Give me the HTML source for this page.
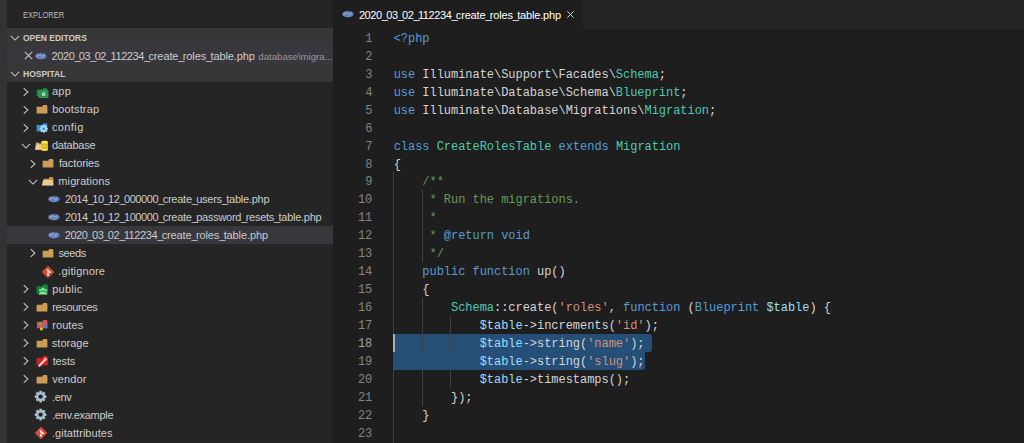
<!DOCTYPE html>
<html><head><meta charset="utf-8"><title>editor</title>
<style>
html,body{margin:0;padding:0;background:#1e1e1e;}
body{width:1024px;height:443px;overflow:hidden;position:relative;font-family:"Liberation Sans",sans-serif;}
.abs{position:absolute;}
#strip{left:0;top:0;width:7px;height:443px;background:#333333;}
#side{left:7px;top:0;width:326px;height:443px;background:#252526;overflow:hidden;}
#band{left:0;top:28.4px;width:326px;height:53.85px;background:#373737;}
#oerow{left:0;top:46.35px;width:326px;height:17.95px;background:#37373d;}
#selrow{left:0;top:226.0px;width:326px;height:17.95px;background:#37373d;}
.u{letter-spacing:-1.7px}.d{letter-spacing:-0.4px}
.t{position:absolute;white-space:nowrap;font-size:11px;line-height:18px;height:18px;color:#cccccc;}
.h{position:absolute;white-space:nowrap;font-size:9.3px;line-height:18px;height:18px;color:#cccccc;font-weight:bold;}
#ed{left:333px;top:0;width:691px;height:443px;background:#1e1e1e;overflow:hidden;}
#tabbar{left:0;top:0;width:691px;height:28.5px;background:#252526;}
#tab{left:0;top:0;width:250px;height:28.5px;background:#1e1e1e;}
.ln{position:absolute;left:0;width:39.3px;text-align:right;font-family:"Liberation Mono",monospace;font-size:12px;line-height:17.96px;height:17.96px;color:#858585;letter-spacing:-0.035px;}
.cl{position:absolute;left:60.7px;white-space:pre;font-family:"Liberation Mono",monospace;font-size:12px;line-height:17.96px;height:17.96px;color:#d4d4d4;letter-spacing:-0.035px;}
.k{color:#569cd6}.c{color:#4ec9b0}.g{color:#6a9955}.s{color:#ce9178}.v{color:#9cdcfe}
.guide{position:absolute;width:1px;background:#404040;}
.sel{position:absolute;background:#264f78;}
</style></head><body>
<div id="strip" class="abs"></div>
<div id="side" class="abs">
<div id="band" class="abs"></div><div id="oerow" class="abs"></div>
<div id="selrow" class="abs"></div>

<div class="t" id="hx" style="left:15.7px;top:5.5px;font-size:9.3px;color:#bbbbbb;transform-origin:0 50%;transform:scaleX(0.815)">EXPLORER</div>
<svg class="abs" style="left:2.5px;top:33.5px" width="10" height="8" viewBox="0 0 10 8"><path d="M0.9 1.9 L5 6 L9.1 1.9" fill="none" stroke="#c5c5c5" stroke-width="1.05"/></svg>
<div class="h" id="ho" style="left:16.3px;top:28.5px;transform-origin:0 50%;transform:scaleX(0.91)">OPEN EDITORS</div>
<svg class="abs" style="left:16.5px;top:51.1px" width="9" height="9" viewBox="0 0 9 9"><path d="M0.8 0.8 L8.2 8.2 M8.2 0.8 L0.8 8.2" stroke="#c5c5c5" stroke-width="1.05"/></svg>
<svg class="abs" style="left:26.700000000000003px;top:48.5px;overflow:visible" width="14" height="14" viewBox="0 0 14 14"><defs><linearGradient id="pg" x1="0" y1="0" x2="0" y2="1"><stop offset="0" stop-color="#485f92"/><stop offset="0.55" stop-color="#5878b8"/><stop offset="1" stop-color="#6b90d0"/></linearGradient></defs><ellipse cx="7" cy="7" rx="5.8" ry="3.2" fill="url(#pg)"/><path d="M2.5 8.3 l0.7 -2.6 q1.7 -0.3 1.4 0.9 q-0.3 0.8 -1.6 0.6 M5.5 7.3 l0.7 -2.7 M5.9 6.1 q1.8 -0.8 1.4 0.6 l-0.2 0.7 M8.3 8.3 l0.7 -2.6 q1.7 -0.3 1.4 0.9 q-0.3 0.8 -1.6 0.6" stroke="#b4bdd2" stroke-width="0.7" fill="none"/></svg>
<div class="t" style="left:44.5px;top:47px"><span id="oe"><span class="d">2020</span><span class="u">_</span><span class="d">03</span><span class="u">_</span><span class="d">02</span><span class="u">_</span><span class="d">112234</span><span class="u">_</span><span style="letter-spacing:-0.113px">create<span class="u">_</span>roles<span class="u">_</span>table.php</span></span><span id="oed" style="font-size:9.65px;color:#9a9a9a;margin-left:3.6px">database\migra...</span></div>
<svg class="abs" style="left:2.5px;top:69.5px" width="10" height="8" viewBox="0 0 10 8"><path d="M0.9 1.9 L5 6 L9.1 1.9" fill="none" stroke="#c5c5c5" stroke-width="1.05"/></svg>
<div class="h" id="hh" style="left:16.3px;top:64.5px;transform-origin:0 50%;transform:scaleX(0.915)">HOSPITAL</div>
<svg class="abs" style="left:15.100000000000001px;top:86.75px" width="8" height="10" viewBox="0 0 8 10"><path d="M1.7 1.2 L5.9 5 L1.7 8.8" fill="none" stroke="#c5c5c5" stroke-width="1.05"/></svg>
<svg class="abs" style="left:27.799999999999997px;top:84.45px;overflow:visible" width="14" height="14" viewBox="0 0 14 14"><path d="M1.6 5.4 H7.3 L8.2 3.9 H11.9 L12.4 5.4 V12 H1.6 Z" fill="#1a7b3d"/><rect x="4" y="6.9" width="9" height="6.5" fill="#1f8d47" stroke="#49bb6b" stroke-width="0.7"/><circle cx="8.6" cy="10.2" r="1.9" fill="#c6efd1"/><path d="M8.6 9.2 V11 M7.8 10.4 L8.6 11.2 L9.4 10.4" stroke="#1f8d47" stroke-width="0.6" fill="none"/></svg>
<div class="t" id="r0" style="left:44.92px;top:82.45px"><span style="letter-spacing:0.345px">app</span></div>
<svg class="abs" style="left:15.100000000000001px;top:104.705px" width="8" height="10" viewBox="0 0 8 10"><path d="M1.7 1.2 L5.9 5 L1.7 8.8" fill="none" stroke="#c5c5c5" stroke-width="1.05"/></svg>
<svg class="abs" style="left:27.799999999999997px;top:102.405px;overflow:visible" width="14" height="14" viewBox="0 0 14 14"><path d="M1.6 4.7 H7.3 L8.2 3 H11.9 L12.4 4.7 V11.5 H1.6 Z" fill="#cc9d54"/></svg>
<div class="t" id="r1" style="left:45.13px;top:100.41px"><span style="letter-spacing:0.127px">bootstrap</span></div>
<svg class="abs" style="left:15.100000000000001px;top:122.66px" width="8" height="10" viewBox="0 0 8 10"><path d="M1.7 1.2 L5.9 5 L1.7 8.8" fill="none" stroke="#c5c5c5" stroke-width="1.05"/></svg>
<svg class="abs" style="left:27.799999999999997px;top:120.36px;overflow:visible" width="14" height="14" viewBox="0 0 14 14"><path d="M1.6 4.9 H7.3 L8.2 3.2 H11.9 L12.4 4.9 V11.6 H1.6 Z" fill="#3a8dd0"/><rect x="7.9" y="4.6" width="1.6" height="8.2" fill="#a9d6ef" transform="rotate(0 8.7 8.7)"/><rect x="7.9" y="4.6" width="1.6" height="8.2" fill="#a9d6ef" transform="rotate(45 8.7 8.7)"/><rect x="7.9" y="4.6" width="1.6" height="8.2" fill="#a9d6ef" transform="rotate(90 8.7 8.7)"/><rect x="7.9" y="4.6" width="1.6" height="8.2" fill="#a9d6ef" transform="rotate(135 8.7 8.7)"/><circle cx="8.7" cy="8.7" r="3.1" fill="#a9d6ef"/><circle cx="8.7" cy="8.7" r="1.3" fill="#3a8dd0"/></svg>
<div class="t" id="r2" style="left:44.91px;top:118.36px"><span style="letter-spacing:0.397px">config</span></div>
<svg class="abs" style="left:14.100000000000001px;top:141.615px" width="10" height="8" viewBox="0 0 10 8"><path d="M0.9 1.9 L5 6 L9.1 1.9" fill="none" stroke="#c5c5c5" stroke-width="1.05"/></svg>
<svg class="abs" style="left:27.799999999999997px;top:138.315px;overflow:visible" width="14" height="14" viewBox="0 0 14 14"><path d="M0.9 4.6 H3.6 L4.3 5.6 H7 V11.6 H0.3 Z" fill="#c9a05c"/><path d="M1.2 6.6 H7.4 V11.8 H0.1 Z" fill="#ebcf98"/><rect x="6.3" y="4" width="6.6" height="7.8" fill="#f1cf35"/><ellipse cx="9.6" cy="4" rx="3.3" ry="1.3" fill="#fbe45e"/><ellipse cx="9.6" cy="11.8" rx="3.3" ry="1.3" fill="#f1cf35"/><path d="M6.3 6.4 q3.3 1.6 6.6 0 M6.3 8.9 q3.3 1.6 6.6 0" stroke="#b8961a" stroke-width="0.7" fill="none"/></svg>
<div class="t" id="r3" style="left:44.91px;top:136.31px"><span style="letter-spacing:-0.213px">database</span></div>
<svg class="abs" style="left:21.5px;top:158.57px" width="8" height="10" viewBox="0 0 8 10"><path d="M1.7 1.2 L5.9 5 L1.7 8.8" fill="none" stroke="#c5c5c5" stroke-width="1.05"/></svg>
<svg class="abs" style="left:34.2px;top:156.26999999999998px;overflow:visible" width="14" height="14" viewBox="0 0 14 14"><path d="M1.6 4.7 H7.3 L8.2 3 H11.9 L12.4 4.7 V11.5 H1.6 Z" fill="#cc9d54"/></svg>
<div class="t" id="r4" style="left:51.91px;top:154.27px"><span style="letter-spacing:-0.115px">factories</span></div>
<svg class="abs" style="left:20.5px;top:177.525px" width="10" height="8" viewBox="0 0 10 8"><path d="M0.9 1.9 L5 6 L9.1 1.9" fill="none" stroke="#c5c5c5" stroke-width="1.05"/></svg>
<svg class="abs" style="left:34.2px;top:174.225px;overflow:visible" width="14" height="14" viewBox="0 0 14 14"><path d="M2.6 4.7 H7.6 L8.5 3 H11.9 L12.4 4.7 V11.3 H2.6 Z" fill="#c4964f"/><path d="M2.2 5.9 H11.6 L12.3 11.5 H0.8 Z" fill="#e9cb91"/></svg>
<div class="t" id="r5" style="left:51.30px;top:172.22px"><span style="letter-spacing:0.111px">migrations</span></div>
<svg class="abs" style="left:39.9px;top:192.18px;overflow:visible" width="14" height="14" viewBox="0 0 14 14"><defs><linearGradient id="pg" x1="0" y1="0" x2="0" y2="1"><stop offset="0" stop-color="#485f92"/><stop offset="0.55" stop-color="#5878b8"/><stop offset="1" stop-color="#6b90d0"/></linearGradient></defs><ellipse cx="7" cy="7" rx="5.8" ry="3.2" fill="url(#pg)"/><path d="M2.5 8.3 l0.7 -2.6 q1.7 -0.3 1.4 0.9 q-0.3 0.8 -1.6 0.6 M5.5 7.3 l0.7 -2.7 M5.9 6.1 q1.8 -0.8 1.4 0.6 l-0.2 0.7 M8.3 8.3 l0.7 -2.6 q1.7 -0.3 1.4 0.9 q-0.3 0.8 -1.6 0.6" stroke="#b4bdd2" stroke-width="0.7" fill="none"/></svg>
<div class="t" id="r6" style="left:57.93px;top:190.18px"><span class="d">2014</span><span class="u">_</span><span class="d">10</span><span class="u">_</span><span class="d">12</span><span class="u">_</span><span class="d">000000</span><span class="u">_</span><span style="letter-spacing:-0.250px">create<span class="u">_</span>users<span class="u">_</span>table.php</span></div>
<svg class="abs" style="left:39.9px;top:210.135px;overflow:visible" width="14" height="14" viewBox="0 0 14 14"><defs><linearGradient id="pg" x1="0" y1="0" x2="0" y2="1"><stop offset="0" stop-color="#485f92"/><stop offset="0.55" stop-color="#5878b8"/><stop offset="1" stop-color="#6b90d0"/></linearGradient></defs><ellipse cx="7" cy="7" rx="5.8" ry="3.2" fill="url(#pg)"/><path d="M2.5 8.3 l0.7 -2.6 q1.7 -0.3 1.4 0.9 q-0.3 0.8 -1.6 0.6 M5.5 7.3 l0.7 -2.7 M5.9 6.1 q1.8 -0.8 1.4 0.6 l-0.2 0.7 M8.3 8.3 l0.7 -2.6 q1.7 -0.3 1.4 0.9 q-0.3 0.8 -1.6 0.6" stroke="#b4bdd2" stroke-width="0.7" fill="none"/></svg>
<div class="t" id="r7" style="left:57.93px;top:208.13px"><span class="d">2014</span><span class="u">_</span><span class="d">10</span><span class="u">_</span><span class="d">12</span><span class="u">_</span><span class="d">100000</span><span class="u">_</span><span style="letter-spacing:-0.254px">create<span class="u">_</span>password<span class="u">_</span>resets<span class="u">_</span>table.php</span></div>
<svg class="abs" style="left:39.9px;top:228.08999999999997px;overflow:visible" width="14" height="14" viewBox="0 0 14 14"><defs><linearGradient id="pg" x1="0" y1="0" x2="0" y2="1"><stop offset="0" stop-color="#485f92"/><stop offset="0.55" stop-color="#5878b8"/><stop offset="1" stop-color="#6b90d0"/></linearGradient></defs><ellipse cx="7" cy="7" rx="5.8" ry="3.2" fill="url(#pg)"/><path d="M2.5 8.3 l0.7 -2.6 q1.7 -0.3 1.4 0.9 q-0.3 0.8 -1.6 0.6 M5.5 7.3 l0.7 -2.7 M5.9 6.1 q1.8 -0.8 1.4 0.6 l-0.2 0.7 M8.3 8.3 l0.7 -2.6 q1.7 -0.3 1.4 0.9 q-0.3 0.8 -1.6 0.6" stroke="#b4bdd2" stroke-width="0.7" fill="none"/></svg>
<div class="t" id="r8" style="left:57.70px;top:226.09px"><span class="d">2020</span><span class="u">_</span><span class="d">03</span><span class="u">_</span><span class="d">02</span><span class="u">_</span><span class="d">112234</span><span class="u">_</span><span style="letter-spacing:-0.113px">create<span class="u">_</span>roles<span class="u">_</span>table.php</span></div>
<svg class="abs" style="left:21.5px;top:248.34499999999997px" width="8" height="10" viewBox="0 0 8 10"><path d="M1.7 1.2 L5.9 5 L1.7 8.8" fill="none" stroke="#c5c5c5" stroke-width="1.05"/></svg>
<svg class="abs" style="left:34.2px;top:246.04499999999996px;overflow:visible" width="14" height="14" viewBox="0 0 14 14"><path d="M1.6 4.7 H7.3 L8.2 3 H11.9 L12.4 4.7 V11.5 H1.6 Z" fill="#cc9d54"/></svg>
<div class="t" id="r9" style="left:51.40px;top:244.04px"><span style="letter-spacing:-0.375px">seeds</span></div>
<svg class="abs" style="left:33.5px;top:264.5px;overflow:visible" width="14" height="14" viewBox="0 0 14 14"><path d="M7 1.2 L12.8 7 L7 12.8 L1.2 7 Z" fill="#de4c36" stroke="#de4c36" stroke-width="0.8" stroke-linejoin="round"/><path d="M5.6 4 L8.9 7.3 M7 5.6 V9.8" stroke="#fff" stroke-width="0.9" fill="none"/><circle cx="7" cy="9.8" r="0.95" fill="#fff"/><circle cx="8.9" cy="7.3" r="0.95" fill="#fff"/><circle cx="7" cy="5.5" r="0.95" fill="#fff"/></svg>
<div class="t" id="r10" style="left:51.36px;top:262.00px"><span style="letter-spacing:0.138px">.gitignore</span></div>
<svg class="abs" style="left:15.100000000000001px;top:284.255px" width="8" height="10" viewBox="0 0 8 10"><path d="M1.7 1.2 L5.9 5 L1.7 8.8" fill="none" stroke="#c5c5c5" stroke-width="1.05"/></svg>
<svg class="abs" style="left:27.799999999999997px;top:281.955px;overflow:visible" width="14" height="14" viewBox="0 0 14 14"><path d="M1.6 4.3 H7.3 L8.2 2.6 H12.3 L12.9 4.3 V11.6 H1.6 Z" fill="#16813c"/><circle cx="8" cy="7.2" r="1.6" fill="#7fe89a"/><circle cx="5.2" cy="8.3" r="1.2" fill="#7fe89a"/><circle cx="10.8" cy="8.3" r="1.2" fill="#7fe89a"/><path d="M3.6 12.6 Q4 9.6 8 9.4 Q12 9.6 12.4 12.6 Z" fill="#7fe89a"/></svg>
<div class="t" id="r11" style="left:45.13px;top:279.95px"><span style="letter-spacing:0.271px">public</span></div>
<svg class="abs" style="left:15.100000000000001px;top:302.21px" width="8" height="10" viewBox="0 0 8 10"><path d="M1.7 1.2 L5.9 5 L1.7 8.8" fill="none" stroke="#c5c5c5" stroke-width="1.05"/></svg>
<svg class="abs" style="left:27.799999999999997px;top:299.90999999999997px;overflow:visible" width="14" height="14" viewBox="0 0 14 14"><path d="M1.6 4.7 H7.3 L8.2 3 H11.9 L12.4 4.7 V11.5 H1.6 Z" fill="#cc9d54"/></svg>
<div class="t" id="r12" style="left:45.21px;top:297.91px"><span style="letter-spacing:-0.341px">resources</span></div>
<svg class="abs" style="left:15.100000000000001px;top:320.16499999999996px" width="8" height="10" viewBox="0 0 8 10"><path d="M1.7 1.2 L5.9 5 L1.7 8.8" fill="none" stroke="#c5c5c5" stroke-width="1.05"/></svg>
<svg class="abs" style="left:27.799999999999997px;top:317.86499999999995px;overflow:visible" width="14" height="14" viewBox="0 0 14 14"><path d="M1.9 3.7 H7.3 L8.2 2 H11.9 L12.5 3.7 V10.3 H1.9 Z" fill="#cf525d"/><path d="M5.5 6 L10.7 8.8 L6.4 10.9 Z" stroke="#8d8d8d" stroke-width="0.5" fill="none"/><circle cx="5.5" cy="6" r="1.8" fill="#62b543"/><circle cx="10.7" cy="8.8" r="1.7" fill="#3b86d6"/><circle cx="6.4" cy="10.9" r="1.6" fill="#e0c020"/></svg>
<div class="t" id="r13" style="left:45.21px;top:315.86px"><span style="letter-spacing:0.091px">routes</span></div>
<svg class="abs" style="left:15.100000000000001px;top:338.12px" width="8" height="10" viewBox="0 0 8 10"><path d="M1.7 1.2 L5.9 5 L1.7 8.8" fill="none" stroke="#c5c5c5" stroke-width="1.05"/></svg>
<svg class="abs" style="left:27.799999999999997px;top:335.82px;overflow:visible" width="14" height="14" viewBox="0 0 14 14"><path d="M1.6 4.7 H7.3 L8.2 3 H11.9 L12.4 4.7 V11.5 H1.6 Z" fill="#cc9d54"/></svg>
<div class="t" id="r14" style="left:44.85px;top:333.82px"><span style="letter-spacing:0.006px">storage</span></div>
<svg class="abs" style="left:15.100000000000001px;top:356.075px" width="8" height="10" viewBox="0 0 8 10"><path d="M1.7 1.2 L5.9 5 L1.7 8.8" fill="none" stroke="#c5c5c5" stroke-width="1.05"/></svg>
<svg class="abs" style="left:27.799999999999997px;top:353.775px;overflow:visible" width="14" height="14" viewBox="0 0 14 14"><path d="M1.6 3.8 H7.3 L8.2 2.1 H12.3 L12.9 3.8 V11.2 H1.6 Z" fill="#d41c1c"/><path d="M4.4 11.8 L10.6 4.9" stroke="#f6c9cd" stroke-width="2.2" stroke-linecap="round"/><path d="M9 3.8 L12 6.4" stroke="#f6c9cd" stroke-width="1"/></svg>
<div class="t" id="r15" style="left:45.68px;top:351.77px"><span style="letter-spacing:-0.150px">tests</span></div>
<svg class="abs" style="left:15.100000000000001px;top:374.03px" width="8" height="10" viewBox="0 0 8 10"><path d="M1.7 1.2 L5.9 5 L1.7 8.8" fill="none" stroke="#c5c5c5" stroke-width="1.05"/></svg>
<svg class="abs" style="left:27.799999999999997px;top:371.72999999999996px;overflow:visible" width="14" height="14" viewBox="0 0 14 14"><path d="M1.6 4.7 H7.3 L8.2 3 H11.9 L12.4 4.7 V11.5 H1.6 Z" fill="#cc9d54"/></svg>
<div class="t" id="r16" style="left:45.24px;top:369.73px"><span style="letter-spacing:0.087px">vendor</span></div>
<svg class="abs" style="left:27.099999999999994px;top:390.18499999999995px;overflow:visible" width="14" height="14" viewBox="0 0 14 14"><rect x="5.3" y="0.8" width="2.6" height="11.6" rx="0.4" fill="#a5c4d2" transform="rotate(0 6.6 6.6)"/><rect x="5.3" y="0.8" width="2.6" height="11.6" rx="0.4" fill="#a5c4d2" transform="rotate(45 6.6 6.6)"/><rect x="5.3" y="0.8" width="2.6" height="11.6" rx="0.4" fill="#a5c4d2" transform="rotate(90 6.6 6.6)"/><rect x="5.3" y="0.8" width="2.6" height="11.6" rx="0.4" fill="#a5c4d2" transform="rotate(135 6.6 6.6)"/><circle cx="6.6" cy="6.6" r="4.4" fill="#a5c4d2"/><circle cx="6.6" cy="6.6" r="2.2" fill="#252526"/></svg>
<div class="t" id="r17" style="left:45.00px;top:387.68px"><span style="letter-spacing:-0.335px">.env</span></div>
<svg class="abs" style="left:27.099999999999994px;top:408.13999999999993px;overflow:visible" width="14" height="14" viewBox="0 0 14 14"><rect x="5.3" y="0.8" width="2.6" height="11.6" rx="0.4" fill="#a5c4d2" transform="rotate(0 6.6 6.6)"/><rect x="5.3" y="0.8" width="2.6" height="11.6" rx="0.4" fill="#a5c4d2" transform="rotate(45 6.6 6.6)"/><rect x="5.3" y="0.8" width="2.6" height="11.6" rx="0.4" fill="#a5c4d2" transform="rotate(90 6.6 6.6)"/><rect x="5.3" y="0.8" width="2.6" height="11.6" rx="0.4" fill="#a5c4d2" transform="rotate(135 6.6 6.6)"/><circle cx="6.6" cy="6.6" r="4.4" fill="#a5c4d2"/><circle cx="6.6" cy="6.6" r="2.2" fill="#252526"/></svg>
<div class="t" id="r18" style="left:45.00px;top:405.64px"><span style="letter-spacing:-0.275px">.env.example</span></div>
<svg class="abs" style="left:27.099999999999994px;top:426.09499999999997px;overflow:visible" width="14" height="14" viewBox="0 0 14 14"><path d="M7 1.2 L12.8 7 L7 12.8 L1.2 7 Z" fill="#de4c36" stroke="#de4c36" stroke-width="0.8" stroke-linejoin="round"/><path d="M5.6 4 L8.9 7.3 M7 5.6 V9.8" stroke="#fff" stroke-width="0.9" fill="none"/><circle cx="7" cy="9.8" r="0.95" fill="#fff"/><circle cx="8.9" cy="7.3" r="0.95" fill="#fff"/><circle cx="7" cy="5.5" r="0.95" fill="#fff"/></svg>
<div class="t" id="r19" style="left:45.00px;top:423.59px"><span style="letter-spacing:0.040px">.gitattributes</span></div>
</div>
<div id="ed" class="abs"><div id="tabbar" class="abs"></div><div id="tab" class="abs"></div>
<svg class="abs" style="left:8px;top:7px;overflow:visible" width="14" height="14" viewBox="0 0 14 14"><defs><linearGradient id="pg" x1="0" y1="0" x2="0" y2="1"><stop offset="0" stop-color="#485f92"/><stop offset="0.55" stop-color="#5878b8"/><stop offset="1" stop-color="#6b90d0"/></linearGradient></defs><ellipse cx="7" cy="7" rx="5.8" ry="3.2" fill="url(#pg)"/><path d="M2.5 8.3 l0.7 -2.6 q1.7 -0.3 1.4 0.9 q-0.3 0.8 -1.6 0.6 M5.5 7.3 l0.7 -2.7 M5.9 6.1 q1.8 -0.8 1.4 0.6 l-0.2 0.7 M8.3 8.3 l0.7 -2.6 q1.7 -0.3 1.4 0.9 q-0.3 0.8 -1.6 0.6" stroke="#b4bdd2" stroke-width="0.7" fill="none"/></svg>
<div class="t" id="tabt" style="left:25.899999999999977px;top:6.1px;color:#ffffff;word-spacing:0"><span class="d">2020</span><span class="u">_</span><span class="d">03</span><span class="u">_</span><span class="d">02</span><span class="u">_</span><span class="d">112234</span><span class="u">_</span><span style="letter-spacing:-0.173px">create<span class="u">_</span>roles<span class="u">_</span>table.php</span></div>
<svg class="abs" style="left:233.10000000000002px;top:10.1px" width="9" height="9" viewBox="0 0 9 9"><path d="M1.3 1.3 L7.7 7.7 M7.7 1.3 L1.3 7.7" stroke="#d0d0d0" stroke-width="1.0"/></svg>
<div class="sel" style="left:60px;top:333.72px;width:259px;height:18.26px;border-radius:0 3px 3px 0"></div>
<div class="guide" style="left:60.0px;top:172.08px;height:287.36px"></div>
<div class="guide" style="left:88.6px;top:190.04px;height:71.84px"></div>
<div class="guide" style="left:88.6px;top:297.80px;height:107.76px"></div>
<div class="guide" style="left:117.2px;top:315.76px;height:71.84px"></div>
<div class="sel" style="left:60px;top:351.68px;width:252px;height:17.96px;border-radius:0 0 3px 0"></div>
<div class="abs" style="left:60px;top:333.72px;width:2px;height:17.96px;background:#aeafad"></div>
<div id="code" class="abs" style="left:0;top:30.8px;width:691px;height:413.080px;transform:scaleY(1.0);transform-origin:0 0">
<div class="ln" style="top:0.000px;color:#858585">1</div>
<div class="cl" id="c1" style="top:0.000px"><span class="k">&lt;?php</span></div>
<div class="ln" style="top:17.960px;color:#858585">2</div>
<div class="ln" style="top:35.920px;color:#858585">3</div>
<div class="cl" id="c3" style="top:35.920px"><span class="k">use</span> Illuminate\Support\Facades\<span class="c">Schema</span>;</div>
<div class="ln" style="top:53.880px;color:#858585">4</div>
<div class="cl" id="c4" style="top:53.880px"><span class="k">use</span> Illuminate\Database\Schema\<span class="c">Blueprint</span>;</div>
<div class="ln" style="top:71.840px;color:#858585">5</div>
<div class="cl" id="c5" style="top:71.840px"><span class="k">use</span> Illuminate\Database\Migrations\<span class="c">Migration</span>;</div>
<div class="ln" style="top:89.800px;color:#858585">6</div>
<div class="ln" style="top:107.760px;color:#858585">7</div>
<div class="cl" id="c7" style="top:107.760px"><span class="k">class</span> <span class="c">CreateRolesTable</span> <span class="k">extends</span> <span class="c">Migration</span></div>
<div class="ln" style="top:125.720px;color:#858585">8</div>
<div class="cl" id="c8" style="top:125.720px">{</div>
<div class="ln" style="top:143.680px;color:#858585">9</div>
<div class="cl" id="c9" style="top:143.680px">    <span class="g">/**</span></div>
<div class="ln" style="top:161.640px;color:#858585">10</div>
<div class="cl" id="c10" style="top:161.640px">    <span class="g"> * Run the migrations.</span></div>
<div class="ln" style="top:179.600px;color:#858585">11</div>
<div class="cl" id="c11" style="top:179.600px">    <span class="g"> *</span></div>
<div class="ln" style="top:197.560px;color:#858585">12</div>
<div class="cl" id="c12" style="top:197.560px">    <span class="g"> * </span><span class="k">@return</span><span class="k"> void</span></div>
<div class="ln" style="top:215.520px;color:#858585">13</div>
<div class="cl" id="c13" style="top:215.520px">    <span class="g"> */</span></div>
<div class="ln" style="top:233.480px;color:#858585">14</div>
<div class="cl" id="c14" style="top:233.480px">    <span class="k">public</span> <span class="k">function</span> up()</div>
<div class="ln" style="top:251.440px;color:#858585">15</div>
<div class="cl" id="c15" style="top:251.440px">    {</div>
<div class="ln" style="top:269.400px;color:#858585">16</div>
<div class="cl" id="c16" style="top:269.400px">        <span class="c">Schema</span>::create(<span class="s">'roles'</span>, <span class="k">function</span> (<span class="k">Blueprint</span> <span class="v">$table</span>) {</div>
<div class="ln" style="top:287.360px;color:#858585">17</div>
<div class="cl" id="c17" style="top:287.360px">            <span class="v">$table</span>-&gt;increments(<span class="s">'id'</span>);</div>
<div class="ln" style="top:305.320px;color:#a0a0a0">18</div>
<div class="cl" id="c18" style="top:305.320px">            <span class="v">$table</span>-&gt;string(<span class="s">'name'</span>);</div>
<div class="ln" style="top:323.280px;color:#858585">19</div>
<div class="cl" id="c19" style="top:323.280px">            <span class="v">$table</span>-&gt;string(<span class="s">'slug'</span>);</div>
<div class="ln" style="top:341.240px;color:#858585">20</div>
<div class="cl" id="c20" style="top:341.240px">            <span class="v">$table</span>-&gt;timestamps();</div>
<div class="ln" style="top:359.200px;color:#858585">21</div>
<div class="cl" id="c21" style="top:359.200px">        });</div>
<div class="ln" style="top:377.160px;color:#858585">22</div>
<div class="cl" id="c22" style="top:377.160px">    }</div>
<div class="ln" style="top:395.120px;color:#858585">23</div>
</div>
</div></body></html>
